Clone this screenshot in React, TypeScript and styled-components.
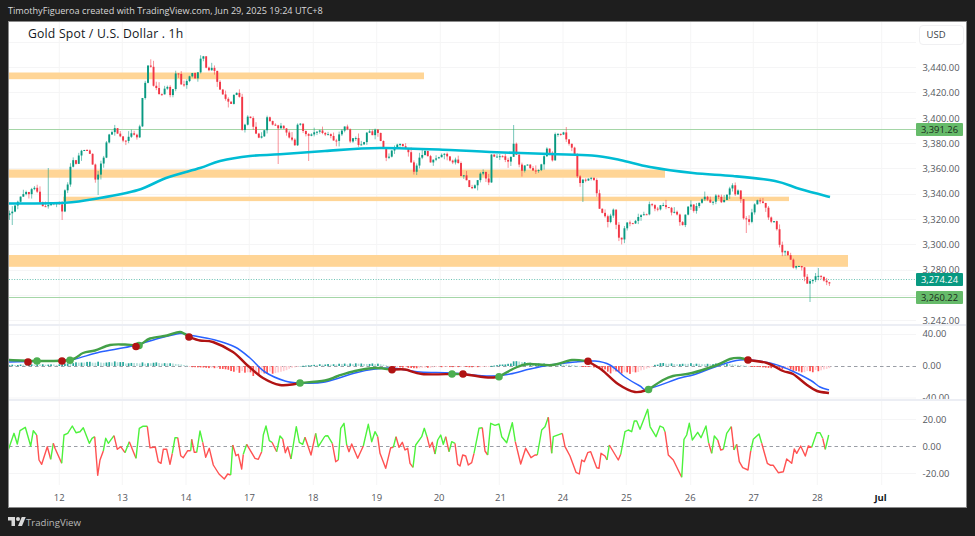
import styled, { createGlobalStyle } from "styled-components";

type Pt = [number, number];

const GlobalStyle = createGlobalStyle`
    html, body {
        margin: 0;
        padding: 0;
        background: #1e1e1e;
    }
`;

// chart data is traced in 3x crop units: offset + u / 3
const trace = (ox: number, oy: number, s: string): Pt[] =>
    s.trim().split(/\s+/).map((p) => {
        const [u, v] = p.split(",").map(Number);
        return [ox + u / 3, oy + v / 3] as Pt;
    });

const toPoints = (list: Pt[]) => list.map(([x, y]) => `${x.toFixed(1)},${y.toFixed(1)}`).join(" ");

// catmull-rom through the traced points so the slow lines do not look polygonal
const smoothPath = (list: Pt[]) => {
    let d = `M${list[0][0]} ${list[0][1]}`;
    for (let i = 0; i < list.length - 1; i++) {
        const p0 = list[i - 1] ?? list[i];
        const p1 = list[i];
        const p2 = list[i + 1];
        const p3 = list[i + 2] ?? p2;
        const c1x = p1[0] + (p2[0] - p0[0]) / 6;
        const c1y = p1[1] + (p2[1] - p0[1]) / 6;
        const c2x = p2[0] - (p3[0] - p1[0]) / 6;
        const c2y = p2[1] - (p3[1] - p1[1]) / 6;
        d += ` C${c1x.toFixed(1)} ${c1y.toFixed(1)} ${c2x.toFixed(1)} ${c2y.toFixed(1)} ${p2[0]} ${p2[1]}`;
    }
    return d;
};

const yAt = (path: Pt[], x: number) => {
    if (x <= path[0][0]) return path[0][1];
    for (let i = 1; i < path.length; i++) {
        if (x <= path[i][0]) {
            const [x0, y0] = path[i - 1];
            const [x1, y1] = path[i];
            return y0 + ((y1 - y0) * (x - x0)) / (x1 - x0 || 1);
        }
    }
    return path[path.length - 1][1];
};

const makeRandom = (start: number) => {
    let seed = start;
    return () => {
        seed = (seed * 16807) % 2147483647;
        return seed / 2147483647;
    };
};

const pricePath: Pt[] = [
    ...trace(0, 140, "25,228 35,215 45,195 60,175 75,155 90,165 100,135 110,150 120,185 130,205 145,195 160,190 175,185 190,222 195,150 205,130 215,55 228,70 240,40 250,25 270,40 290,135 300,70 310,60"),
    ...trace(0, 0, "320,420 330,400 345,385 360,410 375,425 395,400 410,415 420,375 428,290 437,240 443,200 452,200 458,260 470,262 480,295 495,260 505,260 515,300 525,220 535,220 545,260 560,245 575,215 590,240 600,175 613,170 620,215 633,200 645,215 655,255 665,280 680,305 695,310 705,272 720,295 727,400 737,370 745,340 760,380 770,410 790,410 800,350 820,375 835,385 845,375 860,400 875,420 885,435 895,360 910,395 925,410 940,400 955,390"),
    ...trace(325, 100, "0,100 15,100 30,130 50,90 65,75 75,125 90,110 100,135 115,130 130,85 140,105 155,85 170,130 185,180 195,170 205,140 225,135 245,150 255,165 263,215 270,210 280,180 300,155 315,185 330,180 345,165 360,160 380,185 398,180 405,225 420,230 432,265 445,260 460,235 470,215 480,225 490,265 497,165 510,170 530,165 545,185 557,175 565,130 578,175 590,215 605,190 622,215 640,215 655,180 670,130 680,205 690,105 700,105 715,95 725,125 740,140 752,175 760,265 770,240 785,240 800,235 813,250 818,315 835,345 850,365 865,325 875,385 885,430 895,400 905,365 925,370 945,345 965,340"),
    ...trace(650, 170, "0,95 20,120 35,105 50,110 65,125 85,135 95,175 105,140 120,95 130,125 145,100 165,80 185,105 200,70 215,100 235,70 245,40 255,70 270,60 277,140 288,150 298,155 310,115 320,90 340,100 350,120 360,155 372,155 385,190 392,250 405,240 420,265 430,290 445,290 455,290 468,340 485,335 500,315 515,320 527,340 537,340"),
];

// long wicks that stand out from the rest: [x, y]
const spikes: Pt[] = [[12, 225], [47.7, 168], [62, 220], [98, 195], [278, 164], [308, 161], [513, 125], [565, 127], [582, 202], [745, 233], [808.8, 302], [819, 268]];

const CANDLE_STEP = 2.77;

type Candle = { x: number; open: number; close: number; high: number; low: number };

const buildCandles = (): Candle[] => {
    const rnd = makeRandom(41);
    const list: Candle[] = [];
    let prev = yAt(pricePath, 9);
    for (let x = 9.5; x <= 830; x += CANDLE_STEP) {
        const close = yAt(pricePath, x) + (rnd() - 0.5) * 2.4;
        let high = Math.min(prev, close) - rnd() * rnd() * 7;
        let low = Math.max(prev, close) + rnd() * rnd() * 7;
        spikes.forEach(([sx, sy]) => {
            if (Math.abs(sx - x) <= CANDLE_STEP / 2) {
                if (sy < high) high = sy;
                if (sy > low) low = sy;
            }
        });
        list.push({ x, open: prev, close, high, low });
        prev = close;
    }
    return list;
};

const zones = [
    { x: 9, y: 72.5, w: 415, h: 6.7 },
    { x: 9, y: 169.5, w: 656, h: 8.2 },
    { x: 63, y: 196.7, w: 726, h: 4.4 },
    { x: 9, y: 255, w: 839, h: 11.8 },
];

const emaLine: Pt[] = [[9, 203.5], [65, 202.7], [100, 198], [138, 190], [166, 178], [200, 168], [220, 161], [250, 156], [280, 154.3], [325, 151], [380, 148], [450, 150], [490, 152], [550, 154], [592, 155.5], [620, 160], [650, 167], [693, 173], [733, 176], [775, 181], [800, 189], [830, 197]];

const dayTicks: [string, number][] = [["12", 59.3], ["13", 122.3], ["14", 186], ["17", 249.3], ["18", 313.3], ["19", 376.7], ["20", 440.3], ["21", 499.3], ["24", 563], ["25", 626.3], ["26", 690.7], ["27", 753.3], ["28", 817.3], ["Jul", 881.7]];

const macdRuns: { up: boolean; pts: Pt[] }[] = [
    { up: true, pts: [[9, 360], [37, 361], [70, 360], [83, 353], [95, 350.5], [110, 345], [125, 344.5], [139, 345], [150, 338.5], [167, 335.5], [180, 332], [189, 337]] },
    { up: false, pts: [[189, 337], [200, 340.5], [213, 342], [233, 352], [247, 365], [263, 378], [280, 385], [295, 384], [300, 383]] },
    { up: true, pts: [[300, 383], [325, 380.5], [338, 376], [355, 371], [375, 368], [392, 369.7]] },
    { up: false, pts: [[392, 369.7], [405, 369.5], [422, 374], [452, 374]] },
    { up: true, pts: [[452, 374], [463, 374]] },
    { up: false, pts: [[463, 374], [488, 377.5], [499, 376.7]] },
    { up: true, pts: [[499, 376.7], [515, 368], [528, 364], [552, 365], [572, 360], [588, 361.3]] },
    { up: false, pts: [[588, 361.3], [602, 370], [618, 384], [635, 392], [648.5, 389.5]] },
    { up: true, pts: [[648.5, 389.5], [663, 380], [673, 376], [692, 373], [717, 365], [730, 359], [740, 358], [748, 360]] },
    { up: false, pts: [[748, 360], [767, 363], [783, 371], [793, 374], [807, 385], [817, 391], [829, 393]] },
];

const signalLine: Pt[] = [[9, 362], [60, 360.5], [75, 359], [100, 352], [130, 346.5], [160, 338], [180, 333.5], [189, 335], [215, 340], [235, 347], [250, 358], [265, 372], [285, 381], [300, 383], [325, 382], [355, 373], [375, 369], [392, 368], [420, 372], [452, 373], [490, 376], [510, 374], [530, 369], [550, 365], [575, 362], [595, 361], [610, 365], [625, 377], [640, 386], [648, 389], [680, 378], [693, 375], [715, 367], [740, 360], [770, 363], [790, 370], [810, 380], [820, 387], [829, 390]];

// histogram height against the zero line, in pixels
const histogramShape: Pt[] = [[9, 1], [30, 1.5], [60, 1.5], [75, 3], [90, 3.5], [110, 4], [130, 3], [150, 3], [170, 3], [185, 1], [192, -1], [215, -2], [235, -5], [250, -8], [262, -8], [275, -6], [290, -3], [300, 0], [320, 1.5], [345, 2], [375, 2.5], [385, 1], [395, -1], [420, -2], [440, -1], [460, -1], [480, -1], [495, 0.5], [510, 2.5], [515, 5], [528, 3], [550, 2], [570, 1], [590, -1], [600, -3], [610, -6], [620, -7], [635, -6], [648, -3], [655, 1], [663, 3], [680, 2], [700, 2.5], [720, 2], [740, 1], [748, 0], [760, -1], [775, -2], [790, -3.5], [800, -5], [810, -6], [820, -4], [830, -2]];

const macdDots: { x: number; y: number; up: boolean }[] = [
    { x: 28, y: 362, up: false }, { x: 37, y: 361, up: true }, { x: 62, y: 361, up: false }, { x: 70, y: 360.3, up: true },
    { x: 139, y: 345.5, up: true }, { x: 136, y: 346.5, up: false }, { x: 189, y: 337, up: false }, { x: 300, y: 383, up: true },
    { x: 392, y: 369.7, up: false }, { x: 452, y: 374, up: true }, { x: 463, y: 374, up: false }, { x: 499, y: 376.7, up: true },
    { x: 588, y: 361.3, up: false }, { x: 648.5, y: 389.5, up: true }, { x: 748, y: 360, up: false },
];

const rsiRuns: [boolean, number, string][] = [
    [true, 0, "25,390 42,340 52,372 60,332 76,322 92,378 100,332 110,345"],
    [false, 0, "110,345 117,420 125,433 142,380 152,418"],
    [true, 0, "152,418 160,370"],
    [false, 0, "160,370 165,385 185,430"],
    [true, 0, "185,430 192,345 203,340 217,318 228,338 240,335 250,323 268,370 276,355 284,350"],
    [false, 0, "284,350 293,466 300,420 310,393"],
    [true, 0, "310,393 317,355 325,370 342,347"],
    [false, 0, "342,347 352,388 362,380 375,398"],
    [true, 0, "375,398 388,365"],
    [false, 0, "388,365 408,415"],
    [true, 0, "408,415 418,325 428,319 442,319"],
    [false, 0, "442,319 450,383 466,381 475,425 483,430 490,388 500,388 510,433 517,400"],
    [true, 0, "517,400 525,353 533,353"],
    [false, 0, "533,353 542,407 550,413 563,392 572,392"],
    [true, 0, "572,392 575,358"],
    [false, 0, "575,358 583,397 590,397"],
    [true, 0, "590,397 600,333 608,367"],
    [false, 0, "608,367 617,412 628,385 640,435 657,462 673,477 683,462 692,465"],
    [true, 0, "692,465 698,375"],
    [false, 0, "698,375 708,407 715,403 725,447 730,403"],
    [true, 0, "730,403 740,373"],
    [false, 0, "740,373 765,415 775,418 785,395"],
    [true, 0, "785,395 790,345 798,318 808,362 816,367"],
    [false, 0, "816,367 830,395"],
    [true, 0, "830,395 840,348 848,357"],
    [false, 0, "848,357 856,398 863,380 873,417"],
    [true, 0, "873,417 889,320 898,367 908,373 915,352"],
    [false, 0, "915,352 933,405 947,340"],
    [true, 0, "947,340 955,380 975,348"],
    [true, 325, "0,348 8,347 22,370"],
    [false, 325, "22,370 32,425 40,420"],
    [true, 325, "40,420 47,325 57,310 65,375"],
    [false, 325, "65,375 72,395 80,372 98,415 115,378"],
    [true, 325, "115,378 130,313 140,365 150,335 158,350"],
    [false, 325, "158,350 165,400 182,445 197,383 205,382"],
    [true, 325, "205,382 213,350"],
    [false, 325, "213,350 222,382 232,367 240,390 248,385 255,430 264,442"],
    [true, 325, "264,442 272,375 290,350 298,325 306,350"],
    [false, 325, "306,350 314,382 322,367 330,402"],
    [true, 325, "330,402 338,360 347,345 355,373 362,350"],
    [false, 325, "362,350 372,395"],
    [true, 325, "372,395 380,365 390,370"],
    [false, 325, "390,370 398,433 405,438 413,405 422,408 430,435 440,428 447,400"],
    [true, 325, "447,400 462,325 472,323"],
    [false, 325, "472,323 480,393 488,405"],
    [true, 325, "488,405 497,310 510,316 522,312 530,350 545,368 562,308 571,365"],
    [false, 325, "571,365 587,432 602,385 618,413 630,405 637,405"],
    [true, 325, "637,405 650,330 660,320 670,292"],
    [false, 325, "670,292 680,400"],
    [true, 325, "680,400 685,350 712,340"],
    [false, 325, "712,340 720,380 735,408 753,457 763,462 770,420 778,425 788,398 797,395 815,443 822,445 828,400 840,408 846,420"],
    [true, 325, "846,420 853,375"],
    [false, 325, "853,375 880,420 887,403"],
    [true, 325, "887,403 900,335 910,330 920,335 928,303 935,303 945,328 968,268 975,320"],
    [true, 650, "0,320 18,350 30,318 40,323 45,335"],
    [false, 650, "45,335 55,405 70,420 95,472"],
    [true, 650, "95,472 102,358 110,345 118,310 127,360 143,337 153,353 168,318 176,370"],
    [false, 650, "176,370 185,400"],
    [true, 650, "185,400 193,348 203,360"],
    [false, 650, "203,360 212,390 220,388"],
    [true, 650, "220,388 230,340 244,320"],
    [false, 650, "244,320 252,390"],
    [true, 650, "252,390 260,373"],
    [false, 650, "260,373 268,425 278,443 294,450 302,393"],
    [true, 650, "302,393 310,358 327,342 335,370"],
    [false, 650, "335,370 352,430 362,436 370,436 385,458 400,455 410,417 425,430 433,387 440,400 452,378 466,408 475,378 485,382"],
    [true, 650, "485,382 500,338 510,338 518,355"],
    [false, 650, "518,355 526,388"],
    [true, 650, "526,388 536,345"],
];

// the 3,260 slot stays empty: the last-price tag sits on it in the chart
const priceTicks = ["3,440.00", "3,420.00", "3,400.00", "3,380.00", "3,360.00", "3,340.00", "3,320.00", "3,300.00", "3,280.00", "", "3,242.00"];

const DayGrid = ({ top, bottom }: { top: number; bottom: number }) => (
    <>
        {dayTicks.map(([label, x]) => (
            <GridLine key={label} x1={x} x2={x} y1={top} y2={bottom} />
        ))}
    </>
);

const HGrid = ({ rows }: { rows: number[] }) => (
    <>
        {rows.map((y) => (
            <GridLine key={y} x1={9} x2={916} y1={y} y2={y} />
        ))}
    </>
);

const PricePlot = () => {
    const candles = buildCandles();
    return (
        <Plot viewBox="9 22 907 302" width={907} height={302}>
            <HGrid rows={[42.5, 67.5, 92.5, 118.5, 143.5, 168.5, 194.5, 219.5, 244.5, 270.5, 295.5, 320.5]} />
            <DayGrid top={22} bottom={324} />
            {zones.map((z) => (
                <rect key={z.y} x={z.x} y={z.y} width={z.w} height={z.h} fill="#ffd596" />
            ))}
            <line x1={9} x2={916} y1={129.5} y2={129.5} stroke="#a5d6a7" />
            <line x1={9} x2={916} y1={297.5} y2={297.5} stroke="#a5d6a7" />
            <line x1={9} x2={916} y1={279.5} y2={279.5} stroke="#089981" strokeOpacity={0.6} strokeDasharray="1 1.6" />
            {candles.map((c) => {
                const up = c.close < c.open;
                const color = up ? "#089981" : "#f23645";
                const top = Math.min(c.open, c.close);
                return (
                    <g key={c.x}>
                        <line x1={c.x} x2={c.x} y1={c.high} y2={c.low} stroke={color} strokeOpacity={0.55} strokeWidth={1} />
                        <rect x={c.x - 0.95} y={top} width={1.9} height={Math.max(Math.abs(c.open - c.close), 1)} fill={color} />
                    </g>
                );
            })}
            <path d={smoothPath(emaLine)} fill="none" stroke="#00bcd4" strokeWidth={2.6} />
        </Plot>
    );
};

const MacdPlot = () => {
    const rnd = makeRandom(7);
    const bars: { x: number; v: number; fading: boolean }[] = [];
    let last = 0;
    for (let x = 9.5; x <= 830; x += CANDLE_STEP) {
        const v = yAt(histogramShape, x) * (0.75 + rnd() * 0.5);
        bars.push({ x, v, fading: Math.abs(v) < Math.abs(last) });
        last = v;
    }
    return (
        <Plot viewBox="9 326 907 73" width={907} height={73}>
            <HGrid rows={[334.5, 398]} />
            <DayGrid top={326} bottom={399} />
            <line x1={9} x2={916} y1={366.5} y2={366.5} stroke="#9a9ea6" strokeDasharray="3.5 3" />
            {bars.map((b) => (
                <rect
                    key={b.x}
                    x={b.x - 0.85}
                    y={b.v > 0 ? 366 - b.v : 366}
                    width={1.7}
                    height={Math.max(Math.abs(b.v), 1)}
                    fill={b.v > 0 ? (b.fading ? "#b2dfdb" : "#26a69a") : b.fading ? "#ffcdd2" : "#ff5252"}
                />
            ))}
            <path d={smoothPath(signalLine)} fill="none" stroke="#2962ff" strokeWidth={1.5} />
            {macdRuns.map((r) => (
                <path
                    key={r.pts[0][0]}
                    d={smoothPath(r.pts)}
                    fill="none"
                    stroke={r.up ? "#43a047" : "#b01313"}
                    strokeWidth={2.4}
                />
            ))}
            {macdDots.map((d) => (
                <circle key={d.x} cx={d.x} cy={d.y} r={3.8} fill={d.up ? "#4caf50" : "#b01313"} />
            ))}
        </Plot>
    );
};

const RsiPlot = () => (
    <Plot viewBox="9 401 907 84" width={907} height={84}>
        <HGrid rows={[419.5, 473.5]} />
        <DayGrid top={401} bottom={485} />
        <line x1={9} x2={916} y1={446.5} y2={446.5} stroke="#9a9ea6" strokeDasharray="3.5 3" />
        {rsiRuns.map(([up, ox, s]) => (
            <polyline
                key={`${ox}-${s}`}
                points={toPoints(trace(ox, 320, s))}
                fill="none"
                stroke={up ? "#4df23c" : "#ff5252"}
                strokeWidth={1.4}
                strokeLinejoin="round"
            />
        ))}
    </Plot>
);

const TimeAxis = () => (
    <TimeRow>
        {dayTicks.map(([label, x], i) => {
            const right = i === dayTicks.length - 1 ? x + 30 : (dayTicks[i + 1][1] + x) / 2;
            const left = i === 0 ? 2 * x - right : (dayTicks[i - 1][1] + x) / 2;
            return (
                <TimeLabel key={label} $strong={label === "Jul"} style={{ width: right - left, marginLeft: i === 0 ? left - 9 : 0 }}>
                    {label}
                </TimeLabel>
            );
        })}
    </TimeRow>
);

export default function App() {
    return (
        <Page>
            <GlobalStyle />
            <TopBar>TimothyFigueroa created with TradingView.com, Jun 29, 2025 19:24 UTC+8</TopBar>
            <ChartCard>
                <Pane $height={304}>
                    <PricePlot />
                    <Legend>Gold Spot / U.S. Dollar . 1h</Legend>
                    <PriceAxis>
                        <CurrencyBox>USD</CurrencyBox>
                        <TickList $top={10.5}>
                            {priceTicks.map((t, i) => (
                                <Tick key={i} $step={25.3}>{t}</Tick>
                            ))}
                        </TickList>
                        <PriceTag $top={100.7}>3,391.26</PriceTag>
                        <PriceTag $top={251} $last>3,274.24</PriceTag>
                        <PriceTag $top={269}>3,260.22</PriceTag>
                    </PriceAxis>
                </Pane>
                <Pane $height={75}>
                    <MacdPlot />
                    <PriceAxis>
                        <TickList $top={-8}>
                            {["40.00", "0.00", "-40.00"].map((t) => (
                                <Tick key={t} $step={32}>{t}</Tick>
                            ))}
                        </TickList>
                    </PriceAxis>
                </Pane>
                <Pane $height={84} $flat>
                    <RsiPlot />
                    <PriceAxis>
                        <TickList $top={4.5}>
                            {["20.00", "0.00", "-20.00"].map((t) => (
                                <Tick key={t} $step={27}>{t}</Tick>
                            ))}
                        </TickList>
                    </PriceAxis>
                </Pane>
                <TimeAxis />
            </ChartCard>
            <BottomBar>
                <svg width="18" height="14" viewBox="0 0 36 28" fill="#d9d9d9">
                    <path d="M14 22H7V11H0V4h14v18zM28 22h-8l7.5-18h8L28 22z" />
                    <circle cx="20" cy="8" r="4" />
                </svg>
                <BrandName>TradingView</BrandName>
            </BottomBar>
        </Page>
    );
}

const Page = styled.div`
    width: 975px;
    height: 536px;
    overflow: hidden;
    display: flex;
    flex-direction: column;
    background: #1e1e1e;
    font-family: "Open Sans", "Liberation Sans", sans-serif;
`;

const TopBar = styled.div`
    height: 21px;
    padding-left: 8px;
    display: flex;
    align-items: center;
    color: #d8d8d8;
    font-size: 9.15px;
    font-weight: 500;
    white-space: nowrap;
`;

const ChartCard = styled.div`
    width: 959px;
    height: 487px;
    margin-left: 8px;
    box-sizing: border-box;
    border: 1px solid #8a8a8a;
    background: #fff;
    display: flex;
    flex-direction: column;
`;

const Pane = styled.div<{ $height: number; $flat?: boolean }>`
    position: relative;
    height: ${(p) => p.$height}px;
    box-sizing: border-box;
    border-bottom: ${(p) => (p.$flat ? "none" : "2px solid #eceef4")};
    display: flex;
    overflow: hidden;
    flex-shrink: 0;
`;

const Plot = styled.svg`
    display: block;
    flex-shrink: 0;
`;

const GridLine = styled.line`
    stroke: #f5f5f6;
    stroke-width: 1;
`;

const Legend = styled.div`
    position: absolute;
    left: 19px;
    top: 3px;
    color: #131722;
    font-size: 12.2px;
    font-weight: 500;
    line-height: 17px;
    letter-spacing: 0.2px;
`;

const PriceAxis = styled.div`
    position: relative;
    width: 50px;
    flex-shrink: 0;
    background: #fff;
`;

const CurrencyBox = styled.div`
    width: 45px;
    height: 20px;
    margin: 2.5px 0 0 2.5px;
    box-sizing: border-box;
    border: 1px solid #f0f0f2;
    border-radius: 4px;
    padding-left: 7px;
    display: flex;
    align-items: center;
    color: #3c3f47;
    font-size: 9.5px;
`;

const TickList = styled.div<{ $top: number }>`
    margin-top: ${(p) => p.$top}px;
    display: flex;
    flex-direction: column;
`;

const Tick = styled.div<{ $step: number }>`
    height: ${(p) => p.$step}px;
    line-height: ${(p) => p.$step}px;
    padding-left: 6.5px;
    color: #555860;
    font-size: 9.4px;
    white-space: nowrap;
    flex-shrink: 0;
`;

const PriceTag = styled.div<{ $top: number; $last?: boolean }>`
    position: absolute;
    left: 0;
    top: ${(p) => p.$top}px;
    width: 47px;
    height: 13px;
    display: flex;
    align-items: center;
    justify-content: center;
    border-radius: 1px;
    background: ${(p) => (p.$last ? "#089981" : "#66bb6a")};
    color: ${(p) => (p.$last ? "#fff" : "#1c2a1c")};
    font-size: 9.4px;
`;

const TimeRow = styled.div`
    flex: 1;
    padding-top: 3px;
    display: flex;
    align-items: center;
`;

const TimeLabel = styled.div<{ $strong?: boolean }>`
    flex-shrink: 0;
    text-align: center;
    color: ${(p) => (p.$strong ? "#131722" : "#555860")};
    font-size: 9.5px;
    font-weight: ${(p) => (p.$strong ? 700 : 400)};
`;

const BottomBar = styled.div`
    flex: 1;
    padding-left: 8px;
    display: flex;
    align-items: center;
    gap: 0;
`;

const BrandName = styled.span`
    color: #b9b9b9;
    font-size: 9.6px;
    font-weight: 500;
`;
